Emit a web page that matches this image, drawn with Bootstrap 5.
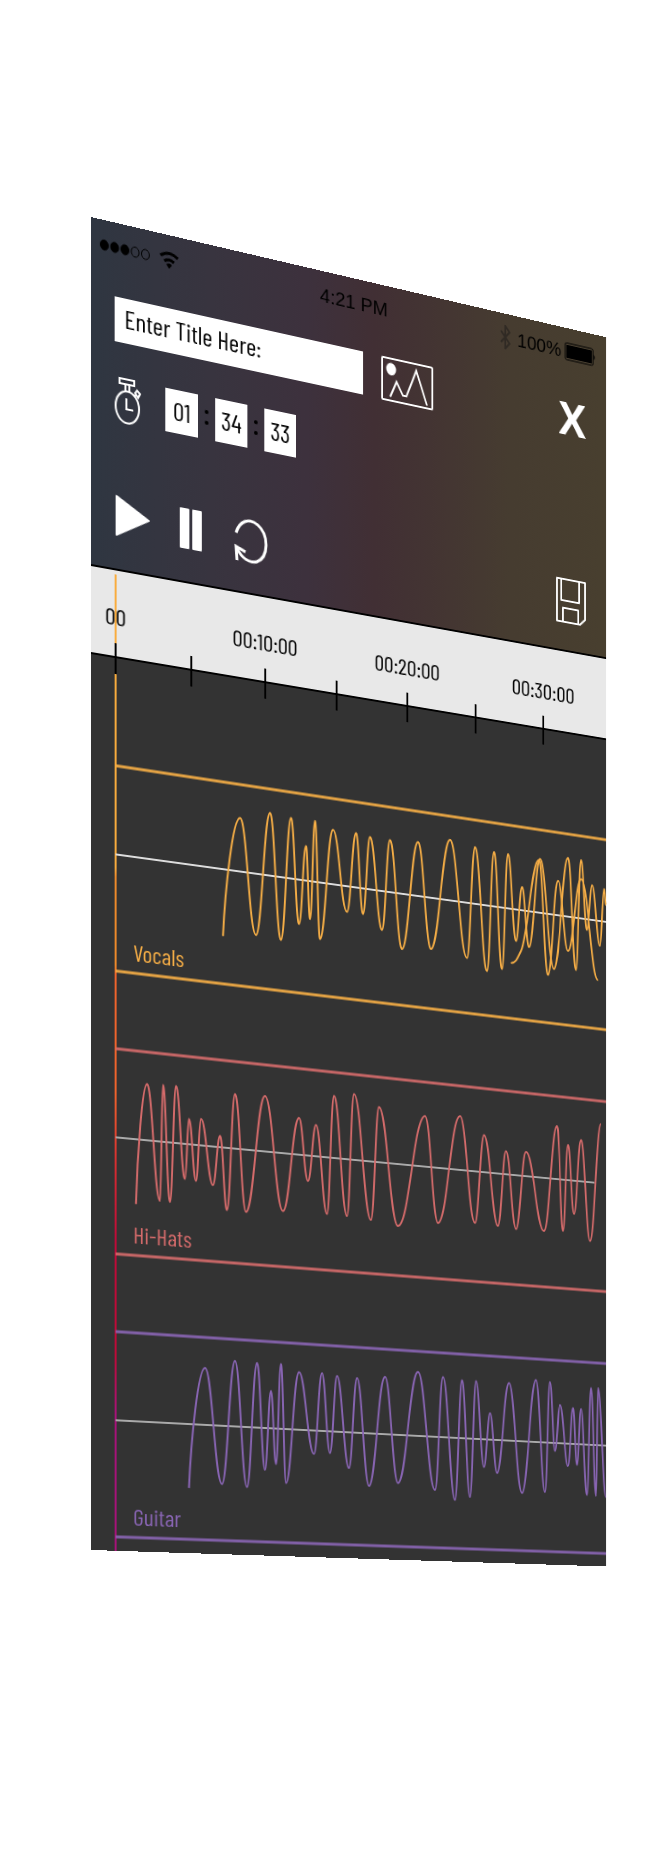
<!DOCTYPE html>
<html lang="en">
<head>
<meta charset="utf-8">
<meta name="viewport" content="width=device-width, initial-scale=1">
<title>Track Recorder</title>
<link href="https://cdn.jsdelivr.net/npm/bootstrap@5.3.0/dist/css/bootstrap.min.css" rel="stylesheet">
<style>
  body { background: #fff; font-family: "Barlow Condensed", Roboto, "Liberation Sans", sans-serif; color: #000; }
  .stage { padding: 217px 14px 282px 91px; }
  /* The whole phone screen is a plane turned away from the viewer */
  .screen { background: #333; transform-origin: 0 0; transform: perspective(1000px) rotateY(8.6deg) skewY(13deg); }
  .top-panel { background: linear-gradient(90deg, #2f3641 0%, #38343f 22%, #3d313d 40%, #412f34 53%, #443632 68%, #463c30 80%, #483f2f 100%); border-bottom: 2px solid #000; padding-bottom: 31px; }
  .status-row { height: 50px; font-family: "Liberation Sans", sans-serif; font-size: 20px; line-height: 24px; padding: 0 12px 0 9px; margin-bottom: 24px; }
  .tool-row { padding: 0 24px; }
  .title-row { height: 45px; margin-bottom: 36px; gap: 20px; }
  .time-row { height: 44px; margin-bottom: 73px; }
  .play-row { height: 44px; }
  .title-input { width: 263px; height: 45px; border: 0; border-radius: 0; background: #fff; color: #000; font-size: 26px; line-height: 32px; padding: 0 10px 6px; }
  .title-input::placeholder { color: #000; opacity: 1; }
  .plain-btn { border: 0; background: none; padding: 0; color: #fff; line-height: 1; display: block; }
  .plain-btn svg, .status-row svg, .time-row svg { display: block; }
  .close-btn { font: 700 48px/44px "Open Sans", sans-serif; }
  .digits { width: 34px; height: 44px; background: #fff; font-size: 26px; line-height: 42px; text-align: center; }
  .colon { width: 18px; }
  .ruler { background: #e8e8e8; height: 88px; border-bottom: 2px solid #000; }
  .ruler svg, .wave { width: 100%; display: block; overflow: visible; }
  .ruler text { font-size: 24px; text-anchor: middle; }
  .playhead { position: absolute; left: 24px; top: 353px; bottom: 0; width: 2px; background: linear-gradient(#f9ac3d 0 30%, #ee8a2a 31% 40%, #f0642c 41% 53%, #d93030 60%, #c00a38 68% 80%, #a8127a 86% 100%); }
  .tracks { padding-top: 108px; padding-bottom: 14px; display: grid; gap: 78px; }
  .track-label { position: absolute; left: 43px; bottom: 7px; font-size: 24px; line-height: 28px; }
  .wave { height: 206px; }
  .wave path { fill: none; stroke-width: 2; }
  .wave .edge { stroke: currentColor; stroke-width: 3; opacity: .9; }
  .vocals { color: #f6ae46; } .hihats { color: #d56b6b; } .guitar { color: #8965b4; }
</style>
</head>
<body>
<main class="stage">
  <div class="screen position-relative">
    <header class="top-panel">
      <div class="status-row d-flex align-items-center">
        <div class="d-flex align-items-center col">
          <svg width="82" height="20" viewBox="0 0 82 20" aria-label="Signal and Wi-Fi">
            <g stroke="#000"><ellipse cx="4.500" cy="10" rx="4" ry="5"/><ellipse cx="15" cy="10" rx="4" ry="5"/><ellipse cx="25.500" cy="10" rx="4" ry="5"/><ellipse cx="36" cy="10" rx="4" ry="5" fill="none"/><ellipse cx="46.500" cy="10" rx="4" ry="5" fill="none"/></g>
            <g fill="none" stroke="#000" stroke-width="3"><path d="M62 7Q71 0 80 7M66 12Q71 8 76 12"/></g><path d="M68 15Q71 12 74 15L71 19Z"/>
          </svg>
        </div>
        <div class="pe-2">4:21 PM</div>
        <div class="d-flex align-items-center justify-content-end col">
          <svg class="me-2" width="12" height="26" viewBox="0 0 12 26" aria-label="Bluetooth"><path d="M1 7L11 19L6 25V1L11 7L1 19" fill="none" stroke="#302a24" stroke-width="2"/></svg>
          <span class="me-1">100%</span>
          <svg width="37" height="20" viewBox="0 0 37 20" aria-label="Battery"><rect x=".5" y="1" width="33" height="18" rx="2" fill="none" stroke="#000"/><rect x="2" y="3" width="30" height="14"/><path d="M34.500 7Q37 10 34.500 13Z"/></svg>
        </div>
      </div>

      <div class="tool-row title-row d-flex align-items-center">
        <input class="title-input" type="text" placeholder="Enter Title Here:" aria-label="Title">
        <button class="plain-btn" type="button" aria-label="Add picture">
          <svg width="58" height="46" viewBox="0 0 58 46" fill="none" stroke="#fff" stroke-width="2"><rect x="1" y="1" width="56" height="44" rx="1"/><ellipse cx="11" cy="12" rx="5.500" ry="6.500" fill="#fff" stroke="none"/><path d="M10 41L17 24L24 37H28L39 8L51 42"/></svg>
        </button>
        <button class="plain-btn close-btn ms-auto" type="button" aria-label="Close">X</button>
      </div>

      <div class="tool-row time-row d-flex align-items-center">
        <svg class="me-4" width="28" height="46" viewBox="0 0 28 46" fill="none" stroke="#fff" stroke-width="2" aria-label="Timer"><ellipse cx="13" cy="29" rx="12" ry="16"/><path d="M5 1H20V6H5ZM11 6V13M15 6V13M12 20V31H19M21 13L23 10L26 13L24 17ZM20 16L22 15"/></svg>
        <span class="digits">01</span>
        <svg class="colon" height="20" viewBox="0 0 18 20"><circle cx="9" cy="4" r="2"/><circle cx="9" cy="15" r="2"/></svg>
        <span class="digits">34</span>
        <svg class="colon" height="20" viewBox="0 0 18 20"><circle cx="9" cy="4" r="2"/><circle cx="9" cy="15" r="2"/></svg>
        <span class="digits">33</span>
      </div>

      <div class="tool-row play-row d-flex align-items-center">
        <button class="plain-btn" type="button" aria-label="Play"><svg width="38" height="44" viewBox="0 0 38 44"><path d="M2 2V41L35 21Z" fill="#fff" stroke="#fff" stroke-width="2" stroke-linejoin="round"/></svg></button>
        <button class="plain-btn ms-4 ps-1" type="button" aria-label="Pause"><svg width="25" height="44" viewBox="0 0 25 44" fill="#fff"><rect x="1" y="1" width="10" height="41" rx="1"/><rect x="14" y="1" width="10" height="41" rx="1"/></svg></button>
        <button class="plain-btn ms-4 ps-2" type="button" aria-label="Start over"><svg width="37" height="46" viewBox="0 0 37 46" fill="none" stroke="#fff" stroke-width="3"><path d="M3 17C7 4 17-1 26 5C38 13 38 36 25 43C17 46 9 42 4 33"/><path d="M4 45L3 31L13 35"/></svg></button>
        <button class="plain-btn ms-auto" type="button" aria-label="Save"><svg width="35" height="48" viewBox="0 0 35 48" fill="none" stroke="#fff" stroke-width="2" stroke-linejoin="round"><path d="M1 1H34V41L28 47H1ZM6 1V24H27V1M8 47V32H26V47"/></svg></button>
      </div>
    </header>

    <div class="playhead"></div>

    <div class="ruler">
      <svg class="position-relative" viewBox="0 0 565 104" preserveAspectRatio="xMinYMin meet" role="img" aria-label="Time ruler">
        <text x="25" y="55">00</text><text x="181" y="55">00:10:00</text><text x="336" y="55">00:20:00</text><text x="491" y="55">00:30:00</text>
        <path d="M25 73V104M103 73V104M181 73V104M258 73V104M336 73V104M413 73V104M491 73V104" stroke="#000" stroke-width="2"/>
      </svg>
    </div>

    <div class="tracks">
      <section class="position-relative vocals" data-top="545">
        <svg class="wave" viewBox="0 0 565 206" preserveAspectRatio="none" aria-hidden="true"><path class="edge" d="M25 0H565M25 206H565"/><path d="M25 89H565" stroke="#ddd"/></svg>
        <div class="track-label">Vocals</div>
      </section>
      <section class="position-relative hihats" data-top="829">
        <svg class="wave" viewBox="0 0 565 206" preserveAspectRatio="none" aria-hidden="true"><path class="edge" d="M25 0H565M25 206H565"/><path d="M25 89H551" stroke="#aaa"/></svg>
        <div class="track-label">Hi-Hats</div>
      </section>
      <section class="position-relative guitar" data-top="1113">
        <svg class="wave" viewBox="0 0 565 206" preserveAspectRatio="none" aria-hidden="true"><path class="edge" d="M25 0H565M25 206H565"/><path d="M25 89H565" stroke="#aaa"/></svg>
        <div class="track-label">Guitar</div>
      </section>
    </div>
  </div>
</main>
<script src="https://cdn.jsdelivr.net/npm/bootstrap@5.3.0/dist/js/bootstrap.bundle.min.js"></script>
<script>
  // Crests and troughs of each recording, as seen by the viewer of the tilted screen
  const waves = {
    vocals: [
      "223,936 240,818 256,935 270,813 281,940 291,818 299,924 306,846 310,919 315,821 320,939 333,830 347,912 356,833 363,914 370,837 382,930 390,840 402,949 418,842 431,949 450,840 467,958 475,847 487,971 494,852 502,969 508,854 516,941 522,887 529,947 540,859 554,969 568,858 576,970 581,860 587,930 592,885 600,946 604,889 606,905",
      "511,963 521,951 539,860 548,975 558,881 568,951 581,879 598,980"
    ],
    hihats: [
      "136,1204 147,1084 160,1201 163,1085 170,1202 176,1086 185,1179 189,1119 196,1181 201,1119 213,1185 220,1136 227,1210 235,1094 246,1212 265,1096 283,1211 299,1118 308,1181 316,1125 327,1214 334,1096 347,1216 354,1094 371,1220 379,1107 398,1226 425,1116 438,1223 460,1116 475,1223 484,1135 498,1226 506,1151 516,1229 526,1152 544,1231 557,1126 563,1231 568,1145 574,1214 581,1140 590,1241 601,1124"
    ],
    guitar: [
      "189,1488 205,1368 222,1484 235,1361 247,1487 257,1363 265,1470 271,1391 276,1464 281,1364 286,1483 299,1372 314,1454 322,1373 330,1453 337,1376 349,1468 357,1378 369,1486 385,1377 398,1483 418,1372 435,1490 443,1377 455,1500 462,1380 470,1497 476,1381 484,1467 490,1413 497,1473 509,1383 522,1493 536,1380 545,1492 550,1382 555,1451 560,1405 568,1466 573,1408 577,1465 581,1409 587,1495 591,1388 596,1496 598,1388 606,1497"
    ]
  };
  const turn = 8.6 * Math.PI / 180, slant = Math.tan(13 * Math.PI / 180), depth = Math.sin(turn) / 1000;

  // Maps a viewed point back onto the flat plane of the screen
  function toPlane(vx, vy, top) {
    const x = (vx - 91) / (Math.cos(turn) - depth * (vx - 91));
    const y = (vy - 217) * (1 + depth * x) - slant * x - top;
    return x.toFixed(1) + " " + y.toFixed(1);
  }

  for (const [name, lines] of Object.entries(waves)) {
    const track = document.querySelector("." + name);
    const top = Number(track.dataset.top);
    for (const line of lines) {
      const pts = line.split(" ").map(p => p.split(",").map(Number));
      // A turning point bends flat; a point passed on the way keeps the direction of its neighbours
      const slopes = pts.map(([x, y], i) => {
        if (i === 0 || i === pts.length - 1) return 0;
        const [px, py] = pts[i - 1], [nx, ny] = pts[i + 1];
        return (y - py) * (ny - y) > 0 ? (ny - py) / (nx - px) * 0.6 : 0;
      });
      let d = "M" + toPlane(...pts[0], top);
      for (let i = 1; i < pts.length; i++) {
        const [ax, ay] = pts[i - 1], [bx, by] = pts[i], k = (bx - ax) * 0.42;
        const steep = i === 1 && Math.abs(by - ay) > 50;
        const startX = steep ? ax + k * 0.3 : ax + k;
        const startY = steep ? ay + (by - ay) * 0.4 : ay + slopes[i - 1] * k;
        d += "C" + toPlane(startX, startY, top) + " " + toPlane(bx - k, by - slopes[i] * k, top) + " " + toPlane(bx, by, top);
      }
      const path = document.createElementNS("http://www.w3.org/2000/svg", "path");
      path.setAttribute("d", d);
      path.setAttribute("stroke", "currentColor");
      track.querySelector("svg").append(path);
    }
  }
</script>
</body>
</html>
